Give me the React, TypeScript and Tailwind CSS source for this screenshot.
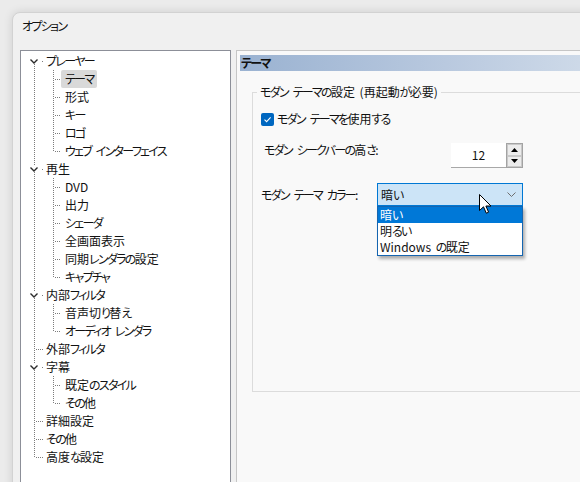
import React from "react";

type Row = {
  label: string;
  kind: "parent" | "child" | "leaf";
  first?: boolean;
  last?: boolean;
  lastChild?: boolean;
  selected?: boolean;
};

const rows: Row[] = [
  { label: "プレーヤー", kind: "parent", first: true },
  { label: "テーマ", kind: "child", selected: true },
  { label: "形式", kind: "child" },
  { label: "キー", kind: "child" },
  { label: "ロゴ", kind: "child" },
  { label: "ウェブ インターフェイス", kind: "child", lastChild: true },
  { label: "再生", kind: "parent" },
  { label: "DVD", kind: "child" },
  { label: "出力", kind: "child" },
  { label: "シェーダ", kind: "child" },
  { label: "全画面表示", kind: "child" },
  { label: "同期レンダラの設定", kind: "child" },
  { label: "キャプチャ", kind: "child", lastChild: true },
  { label: "内部フィルタ", kind: "parent" },
  { label: "音声切り替え", kind: "child" },
  { label: "オーディオ レンダラ", kind: "child", lastChild: true },
  { label: "外部フィルタ", kind: "leaf" },
  { label: "字幕", kind: "parent" },
  { label: "既定のスタイル", kind: "child" },
  { label: "その他", kind: "child", lastChild: true },
  { label: "詳細設定", kind: "leaf" },
  { label: "その他", kind: "leaf" },
  { label: "高度な設定", kind: "leaf", last: true },
];

const DOT = "#7c7c7c";

// Narrow the kana runs, to mimic the proportional kana of the Windows UI font.
function J({ t }: { t: string }) {
  const parts = t.split(/([\u3040-\u30ff]+| )/).filter((p) => p !== "");
  return (
    <>
      {parts.map((p, i) =>
        p === " " ? (
          <span key={i} className="ml-[2px]">
            {" "}
          </span>
        ) : /[\u3040-\u30ff]/.test(p) ? (
          <span key={i} className="tracking-[-1.7px]">
            {p}
          </span>
        ) : (
          <React.Fragment key={i}>{p}</React.Fragment>
        )
      )}
    </>
  );
}

function Gutter({ row }: { row: Row }) {
  if (row.kind === "child") {
    return (
      <svg width="40" height="18" className="shrink-0" shapeRendering="crispEdges">
        <line x1="13.5" y1="0" x2="13.5" y2="18" stroke={DOT} strokeDasharray="1 1" />
        <line x1="32.5" y1="0" x2="32.5" y2={row.lastChild ? 10 : 18} stroke={DOT} strokeDasharray="1 1" />
        <line x1="34" y1="9.5" x2="40" y2="9.5" stroke={DOT} strokeDasharray="1 1" />
      </svg>
    );
  }
  if (row.kind === "parent") {
    return (
      <svg width="22" height="18" className="shrink-0" shapeRendering="crispEdges">
        {!row.first && <line x1="13.5" y1="0" x2="13.5" y2="6" stroke={DOT} strokeDasharray="1 1" />}
        <line x1="13.5" y1="12" x2="13.5" y2="18" stroke={DOT} strokeDasharray="1 1" />
        <rect x="21" y="9" width="1" height="1" fill={DOT} />
        <path d="M9.5 7.5 L13 11 L16.5 7.5" fill="none" stroke="#2b2b2b" strokeWidth="1.4" shapeRendering="geometricPrecision" />
      </svg>
    );
  }
  return (
    <svg width="22" height="18" className="shrink-0" shapeRendering="crispEdges">
      <line x1="13.5" y1="0" x2="13.5" y2={row.last ? 10 : 18} stroke={DOT} strokeDasharray="1 1" />
      <line x1="15" y1="9.5" x2="22" y2="9.5" stroke={DOT} strokeDasharray="1 1" />
    </svg>
  );
}

function TreeRow({ row }: { row: Row }) {
  return (
    <div className="flex h-[18px] items-center">
      <Gutter row={row} />
      <div
        className={
          row.selected
            ? "h-[18px] rounded-[2px] bg-[#d9d9d9] px-[4px] leading-[18px]"
            : row.kind === "child"
            ? "h-[18px] px-[4px] leading-[18px]"
            : "h-[18px] pl-[3px] pr-[4px] leading-[18px]"
        }
      >
        <J t={row.label} />
      </div>
    </div>
  );
}

export default function App() {
  return (
    <div
      className="relative h-[482px] w-[580px] overflow-hidden bg-[#ebebeb] text-[12px] text-[#111] [font-feature-settings:'palt']"
      style={{ fontFamily: '"Noto Sans CJK JP", "Noto Sans", sans-serif' }}
    >
      <div className="ml-[12px] mt-[12px] h-[490px] w-[600px] rounded-tl-[8px] border border-[#d2d2d2] bg-[#f0f0f0] shadow-[0_0_10px_rgba(0,0,0,0.12)]">
        <div className="h-[37px] pl-[9px] pt-[5px] leading-[16px]">
          <J t="オプション" />
        </div>
        <div className="flex pl-[7px]">
          {/* Tree */}
          <div className="h-[450px] w-[211px] shrink-0 border border-[#8c8f98] bg-white pt-[1px]">
            {rows.map((r, i) => (
              <TreeRow key={i} row={r} />
            ))}
          </div>
          {/* Right panel */}
          <div className="ml-[5px] h-[450px] flex-1 border-l border-t border-[#c6c6c6] bg-[#f9f9f9] pl-[3px] pt-[4px]">
            <div className="h-[16px] bg-gradient-to-r from-[#9ab2d1] via-[#b9c9df] to-[#d8e2ed] pl-[1px] font-semibold leading-[16px]">
              <J t="テーマ" />
            </div>
            <fieldset className="ml-[12px] mt-[13px] h-[308px] w-[400px] border border-[#dcdcdc]">
              <legend className="ml-[4px] px-[3px] leading-[16px]">
                <J t="モダン テーマの設定 (再起動が必要)" />
              </legend>
              <div className="mt-[11px] flex h-[16px] items-center pl-[8px]">
                <div className="flex h-[13px] w-[13px] items-center justify-center rounded-[2px] bg-[#0067c0]">
                  <svg width="9" height="9" viewBox="0 0 9 9">
                    <path d="M1.5 4.6 L3.6 6.6 L7.6 2.4" fill="none" stroke="white" strokeWidth="1.1" />
                  </svg>
                </div>
                <span className="ml-[3px] leading-[16px]">
                  <J t="モダン テーマを使用する" />
                </span>
              </div>
              <div className="mt-[16px] flex h-[25px] items-start pl-[11px]">
                <span className="w-[187px] leading-[14px]">
                  <J t="モダン シークバーの高さ:" />
                </span>
                <div className="flex h-[25px] w-[55px] items-center justify-center border-b border-[#a8a8a8] bg-white leading-[16px]">
                  12
                </div>
                <div className="flex h-[25px] w-[17px] flex-col border border-[#a3a3a3] bg-[#f0f0f0]">
                  <div className="flex flex-1 items-center justify-center border border-[#c9c9c9] bg-[#ececec]">
                    <svg width="7" height="4" viewBox="0 0 7 4">
                      <path d="M0 4 L3.5 0 L7 4 Z" fill="#000" />
                    </svg>
                  </div>
                  <div className="flex flex-1 items-center justify-center border border-[#c9c9c9] bg-[#ececec]">
                    <svg width="7" height="4" viewBox="0 0 7 4">
                      <path d="M0 0 L3.5 4 L7 0 Z" fill="#000" />
                    </svg>
                  </div>
                </div>
              </div>
              <div className="mt-[15px] flex items-center pl-[8px]">
                <span className="w-[116px]">
                  <J t="モダン テーマ カラー:" />
                </span>
                <div className="relative">
                  <div className="flex h-[23px] w-[146px] items-center justify-between border border-[#0078d4] bg-[#cce4f7] pl-[3px] pr-[6px]">
                    <span>
                      <J t="暗い" />
                    </span>
                    <svg width="9" height="5" viewBox="0 0 9 5">
                      <path d="M0.5 0.5 L4.5 4.5 L8.5 0.5" fill="none" stroke="#6e6e6e" strokeWidth="1" />
                    </svg>
                  </div>
                  <div className="absolute left-0 top-[23px] w-[146px] border border-[#1565b0] bg-white shadow-[2px_3px_3px_rgba(0,0,0,0.3)]">
                    <div className="h-[16px] bg-[#0078d7] pl-[2px] leading-[16px] text-white">
                      <J t="暗い" />
                    </div>
                    <div className="h-[16px] pl-[2px] leading-[16px]">
                      <J t="明るい" />
                    </div>
                    <div className="h-[16px] pl-[2px] leading-[16px]">
                      <J t="Windows の既定" />
                    </div>
                  </div>
                  <svg
                    className="absolute left-[102px] top-[11px]"
                    width="14"
                    height="21"
                    viewBox="0 0 14 21"
                  >
                    <path
                      d="M0.5 0.5 L0.5 16.5 L4.5 12.8 L7.3 19.2 L9.6 18.2 L6.9 12 L12 12 Z"
                      fill="white"
                      stroke="black"
                      strokeWidth="1"
                      strokeLinejoin="round"
                    />
                  </svg>
                </div>
              </div>
            </fieldset>
          </div>
        </div>
      </div>
    </div>
  );
}
